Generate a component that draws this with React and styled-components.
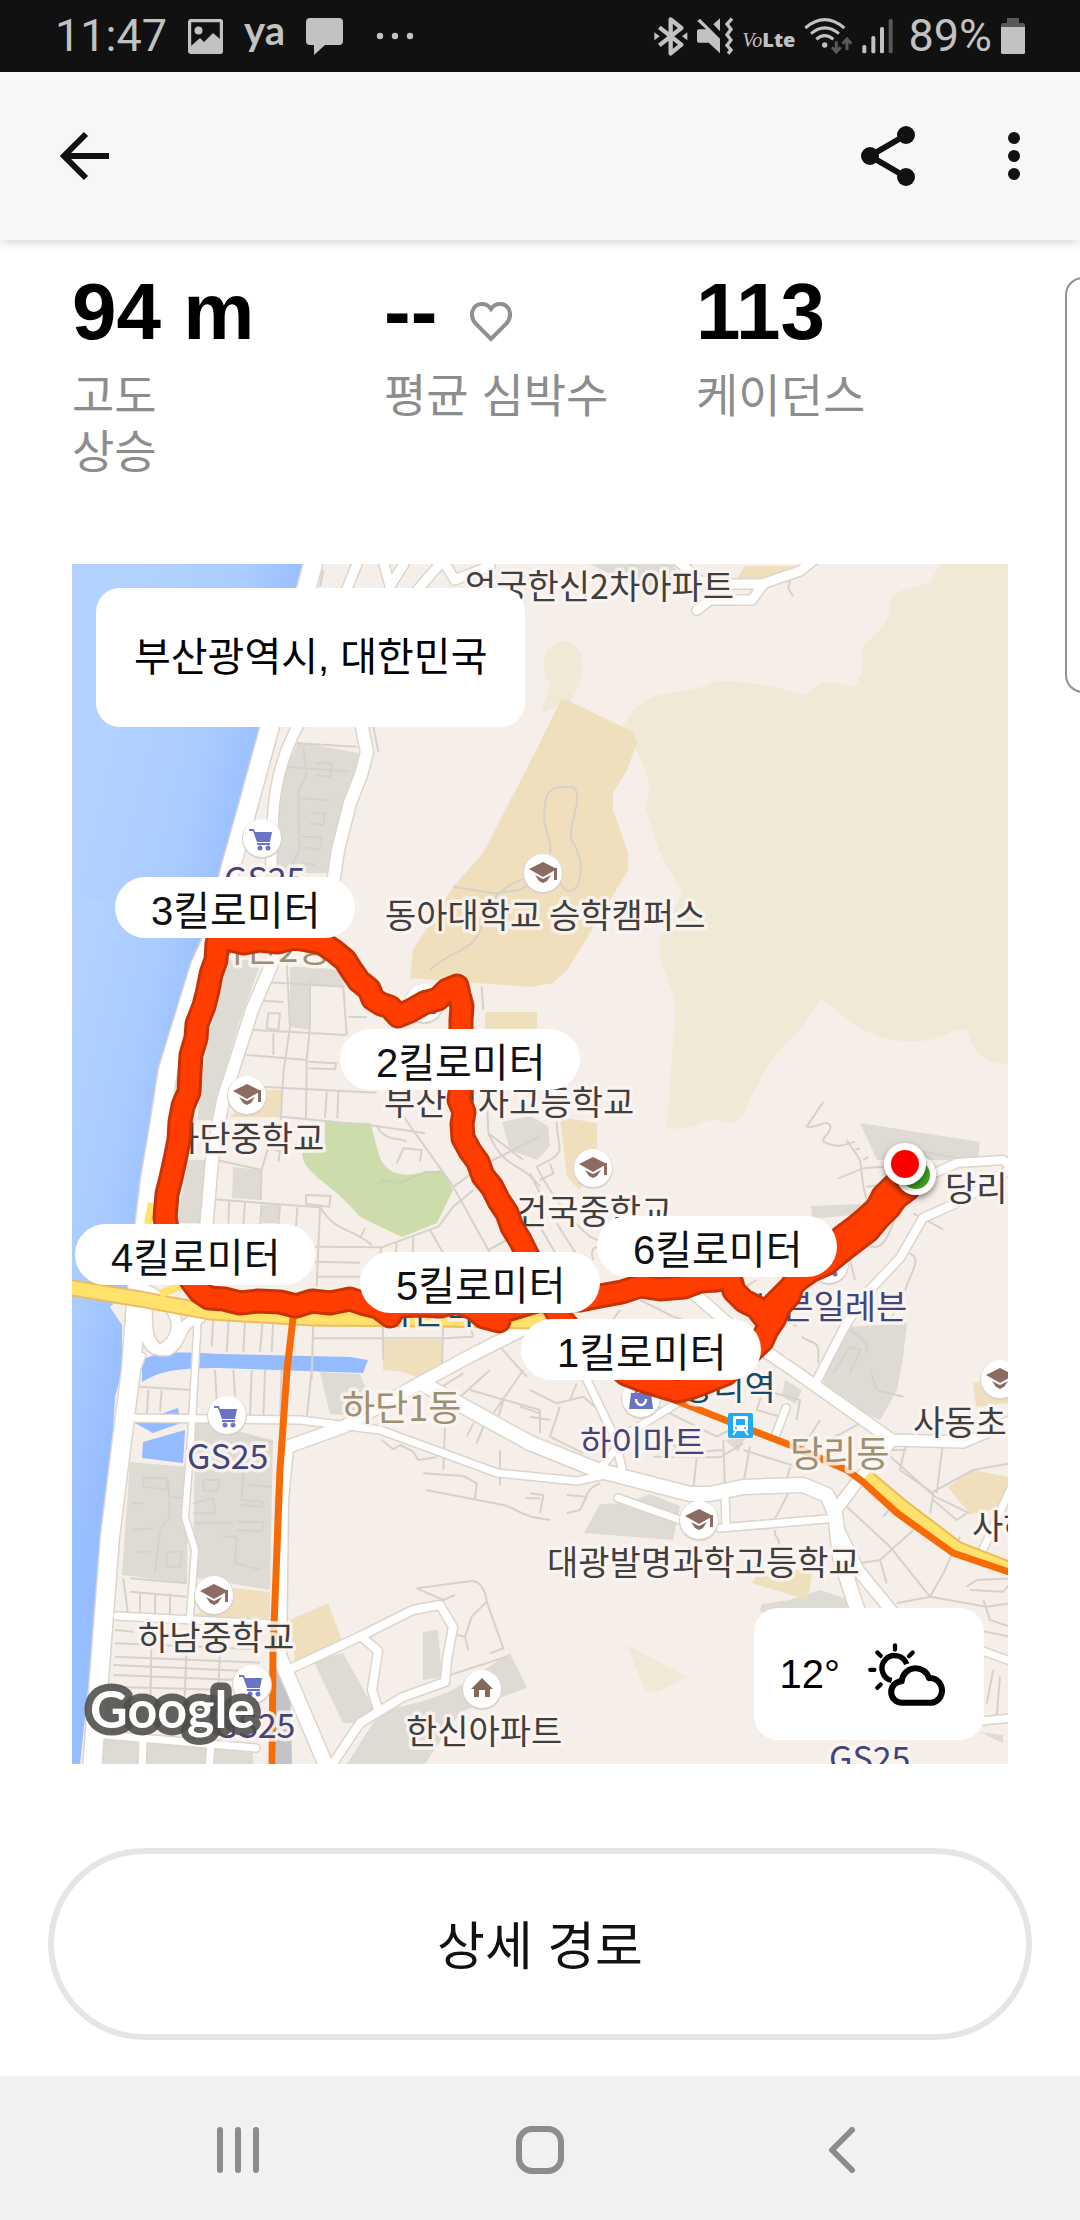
import React from "react";
import styled, { createGlobalStyle } from "styled-components";

const GlobalStyle = createGlobalStyle`
  *, *::before, *::after { box-sizing: border-box; }
  body {
    margin: 0;
    background: #ffffff;
    color: #111111;
    font-family: "Liberation Sans", "Noto Sans CJK KR", sans-serif;
  }
  button {
    border: 0;
    padding: 0;
    background: none;
    color: inherit;
    font: inherit;
    cursor: pointer;
  }
  svg { display: block; flex: none; }
`;

const Screen = styled.div`
  position: relative;
  display: flex;
  flex-direction: column;
  min-height: 100vh;
  overflow-x: hidden;
`;

const StatusBar = styled.div`
  display: flex;
  align-items: center;
  justify-content: space-between;
  height: 72px;
  padding: 0 55px;
  background: #111111;
  color: #c2c2c2;
  font-family: Roboto, sans-serif;
  font-size: 45px;
  line-height: 72px;
`;

const StatusGroup = styled.div`
  display: flex;
  align-items: center;
  gap: ${(p) => p.$gap}px;
`;

const Battery = styled.div`
  display: flex;
  align-items: center;
  gap: 9px;
  margin-left: 6px;
`;

const Carrier = styled.span`
  font-family: ${(p) => (p.$script ? '"Liberation Serif", serif' : '"Open Sans", sans-serif')};
  font-style: ${(p) => (p.$script ? "italic" : "normal")};
  font-weight: ${(p) => (p.$script ? 400 : 800)};
  font-size: 20px;
`;

const AppMark = styled.span`
  font-family: Lato, sans-serif;
  font-weight: 700;
  font-size: 40px;
  line-height: 60px;
  padding-bottom: 12px;
`;

const Toolbar = styled.header`
  display: flex;
  align-items: center;
  justify-content: space-between;
  height: 168px;
  padding: 0 36px;
  background: #f7f7f7;
  box-shadow: 0 0 12px rgba(0, 0, 0, 0.24);
  clip-path: inset(0 0 -20px 0);
`;

const ToolbarActions = styled.div`
  display: flex;
  gap: 30px;
  margin-right: -18px;
`;

const IconButton = styled.button`
  display: flex;
  align-items: center;
  justify-content: center;
  width: 96px;
  height: 96px;
`;

const Content = styled.main`
  display: flex;
  flex: 1;
  flex-direction: column;
  gap: 84px;
  padding: 24px 0 36px;
`;

const Stats = styled.dl`
  display: grid;
  grid-template-columns: repeat(3, 1fr);
  margin: 0 72px;
`;

const Stat = styled.div`
  display: flex;
  flex-direction: column;
  gap: 8px;
`;

const StatValue = styled.dd`
  display: flex;
  align-items: center;
  gap: 32px;
  margin: 0;
  color: #000000;
  font-size: 80px;
  font-weight: 700;
  line-height: 96px;
  white-space: nowrap;

  svg { margin-top: 20px; }
`;

const StatLabel = styled.dt`
  order: 1;
  color: #8d8d8d;
  font-size: 46px;
  line-height: 56px;
`;

const EdgePanel = styled.aside`
  position: absolute;
  top: 277px;
  right: -25px;
  width: 40px;
  height: 416px;
  border: 2px solid #919191;
  border-radius: 18px;
  background: #ffffff;
`;

const MapCard = styled.section`
  position: relative;
  margin: 0 72px;
  aspect-ratio: 936 / 1200;
  overflow: hidden;
`;

const MapArt = styled.svg`
  width: 100%;
  height: 100%;
`;

const MapLabel = styled.text`
  fill: ${(p) => p.$tone};
  stroke: #fcf5f2;
  stroke-width: 7px;
  stroke-linejoin: round;
  stroke-opacity: 0.85;
  paint-order: stroke;
  font-family: "Noto Sans CJK KR", sans-serif;
  font-weight: 400;
  font-size: ${(p) => p.$size}px;
`;

const GoogleMark = styled.text`
  fill: #ffffff;
  stroke: #4d4c49;
  stroke-width: 15px;
  stroke-linejoin: round;
  stroke-opacity: 0.88;
  paint-order: stroke;
  font-family: Lato, sans-serif;
  font-weight: 700;
  font-size: 52px;
`;

const Pin = styled.div`
  position: absolute;
  left: ${(p) => (p.$x / 936) * 100}%;
  top: ${(p) => (p.$y / 1200) * 100}%;
  height: 61px;
  padding: 4px 35px 0 36px;
  border-radius: 31px;
  background: #ffffff;
  color: #111111;
  font-size: 40px;
  line-height: 60px;
  white-space: nowrap;
`;

const Chip = styled.div`
  position: absolute;
  display: flex;
  align-items: center;
  border-radius: 24px;
  background: #ffffff;
  color: #000000;
  font-size: 40px;
  white-space: nowrap;
`;

const PlaceChip = styled(Chip)`
  top: 24px;
  left: 24px;
  height: 139px;
  padding: 0 38px 8px;
`;

const WeatherChip = styled(Chip)`
  right: 24px;
  bottom: 24px;
  gap: 27px;
  height: 132px;
  padding: 0 37px 0 26px;
`;

const RouteButton = styled.button`
  height: 192px;
  margin: 0 48px;
  padding-bottom: 4px;
  border: 6px solid #e5e5e5;
  border-radius: 96px;
  color: #111111;
  font-size: 52px;
  font-weight: 400;
`;

const NavBar = styled.nav`
  display: grid;
  grid-template-columns: repeat(3, 1fr);
  height: 144px;
  padding: 4px 87px 0;
  background: #f1f1f1;
`;

const NavButton = styled.button`
  display: flex;
  align-items: center;
  justify-content: center;
`;

/* ---------- map data ---------- */

const DARK = "#403f3e";
const SHOP = "#41457a";
const AREA = "#9c8f72";
const RAIL = "#144a69";

const labels = [
  ["엄궁한신2차아파트", 465, 599, DARK],
  ["GS25", 224, 892, SHOP],
  ["동아대학교 승학캠퍼스", 385, 928, DARK],
  ["하단2동", 212, 962, AREA],
  ["부산여자고등학교", 384, 1115, DARK],
  ["하단중학교", 168, 1151, DARK],
  ["건국중학교", 516, 1224, DARK],
  ["당리중학교", 945, 1201, DARK],
  ["세븐일레븐", 751, 1319, SHOP],
  ["하단역", 381, 1324, RAIL],
  ["당리역", 682, 1400, RAIL],
  ["하이마트", 580, 1455, SHOP],
  ["당리동", 790, 1467, AREA],
  ["하단1동", 342, 1421, AREA],
  ["사동초등학교", 913, 1435, DARK],
  ["사하", 972, 1539, DARK],
  ["대광발명과학고등학교", 547, 1575, DARK],
  ["GS25", 187, 1469, SHOP],
  ["하남중학교", 138, 1650, DARK],
  ["GS25", 214, 1738, SHOP],
  ["한신아파트", 406, 1744, DARK],
  ["GS25", 829, 1771, SHOP],
];

const pois = [
  ["cart", 262, 838],
  ["school", 543, 873],
  ["bag", 424, 1003],
  ["school", 247, 1095],
  ["school", 593, 1168],
  ["cart", 829, 1264],
  ["school", 1000, 1379],
  ["bag", 641, 1398],
  ["cart", 227, 1415],
  ["school", 699, 1520],
  ["school", 214, 1595],
  ["cart", 252, 1684],
  ["home", 482, 1689],
];

const pins = [
  ["3킬로미터", 43, 313],
  ["2킬로미터", 268, 465],
  ["4킬로미터", 3, 660],
  ["5킬로미터", 288, 688],
  ["6킬로미터", 525, 652],
  ["1킬로미터", 449, 755],
];

const routePath =
  "M900 1180 L891 1188 883 1196 877 1208 866 1218 854 1228 842 1237 832 1245 L818 1259 804 1270 793 1284 789 1296 780 1306 775 1318 767 1330 762 1341 L744 1358 726 1374 706 1382 690 1388 677 1391 660 1386 644 1381 626 1374 L600 1352 575 1334 560 1318 544 1288 527 1254 L520 1240 512 1227 507 1213 499 1201 492 1187 483 1176 478 1162 470 1151 463 1138 462 1124 464 1112 459 1100 461 1087 L461 1020 462 1006 459 995 457 986 447 990 438 999 424 1003 410 1011 398 1016 390 1007 381 1004 373 999 369 989 359 981 352 971 345 960 334 951 322 943 307 940 293 938 278 942 260 940 244 943 228 939 217 943 L216 960 211 974 208 990 204 1006 197 1024 196 1038 191 1055 190 1072 189 1092 183 1106 180 1122 179 1140 175 1160 171 1178 167 1194 165 1218 L172 1252 193 1283 200 1292 209 1298 224 1299 240 1303 258 1301 280 1302 296 1306 312 1301 330 1303 350 1299 362 1303 378 1307 390 1316 L396 1306 420 1305 440 1306 456 1302 473 1308 484 1317 499 1321 L500 1312 540 1300 580 1300 600 1296 622 1292 640 1286 660 1289 684 1287 700 1281 716 1280 730 1277 734 1291 744 1301 756 1307 764 1317 L773 1305 786 1292 799 1279 812 1270 826 1264 L843 1250 856 1240 868 1231 878 1219 889 1208 896 1198 908 1189";

const white = "#ffffff";
const casing = "#dcd5ca";

const roads = [
  [18, "M313 564 L267 737 247 810 232 863 212 940 200 966 168 1070 157 1140 150 1180 137 1290 131 1370 122 1440 110 1537 101 1653 92 1770"],
  [10, "M300 722 C284 750 275 780 273 817 L271 870"],
  [12, "M361 722 L367 752 361 775 350 803 338 850 332 890 318 950 M278 945 L271 966 252 1010 236 1060 223 1100 212 1160 206 1230 202 1310"],
  [9, "M357 564 L340 606 M384 564 L390 586 404 564 M440 564 L400 610 M445 564 L455 580 490 566"],
  [9, "M677 560 L700 581 730 584 762 584 800 571 814 560 M762 586 L752 600 710 600 697 610"],
  [10, "M133 1310 C150 1340 145 1352 168 1350 C184 1342 177 1322 200 1318 M146 1290 C182 1305 186 1338 160 1350 C144 1342 148 1325 146 1300"],
  [6, "M200 1314 L300 1318 M136 1372 L142 1356 M198 1315 L191 1440 185 1517 195 1550 190 1617"],
  [7, "M131 1418 L300 1420 380 1430 443 1453 497 1473 577 1481 613 1473"],
  [12, "M280 1660 L282 1500 287 1447 343 1427 413 1387 470 1356 545 1318"],
  [14, "M423 1384 L530 1443 597 1470 690 1494 710 1494 743 1487 803 1485 827 1495 835 1513 840 1557 858 1612"],
  [11, "M837 1527 L858 1570 894 1614 M833 1514 L857 1482 892 1440 M892 1440 L963 1442 1010 1422 M892 1440 L820 1389 793 1370 740 1334 690 1290"],
  [8, "M815 1384 L843 1330 863 1297 900 1258 923 1218 963 1200 1012 1168 1003 1160 957 1163 930 1175"],
  [14, "M278 1653 L328 1770"],
  [8, "M290 1669 L363 1635 413 1610 440 1605 453 1627 447 1660 445 1682 403 1697 360 1723 330 1768 M362 1637 L378 1651 372 1690 378 1709"],
  [7, "M117 1616 L193 1620 272 1624 M93 1734 L256 1748"],
  [7, "M618 1498 L683 1521 M720 1528 L826 1519 M725 1492 L726 1526"],
  [7, "M786 1408 L776 1434 M586 1378 L614 1436 622 1468 M682 1400 L630 1432 602 1466"],
  [7, "M980 1556 L1010 1490 M980 1650 L1010 1661 M970 1722 L1012 1718 M143 1740 L142 1770 M211 1744 L209 1770"],
];

/* fine streets, drawn on quarter tiles at three units per map unit */
const lanes = [
  [60, 960, "M680 0 L690 200 670 340 662 480 M600 65 L850 80 860 225 M575 210 L860 225 M560 285 L740 300 738 480 M600 380 L950 398 M640 220 L640 285 M625 160 L660 160 655 210 620 205 Z M750 60 L750 200 740 300 M605 122 L670 126 M865 170 L920 172 M745 305 L828 310 825 328 745 325 M835 395 L832 475 M800 395 L795 475 M665 470 L950 498 1095 520 M995 420 L1180 680 1285 870 1300 900 M950 498 C980 550 1020 530 1040 545 M1010 610 L1030 565 1085 570 1080 605 M470 600 L605 630 625 560 660 575 655 605 M605 630 L602 720 M460 718 L780 742 C830 820 870 800 935 855 M738 705 L812 708 808 740 738 732 Z M508 725 L505 790 M555 725 L550 795 M605 735 L600 795 M660 738 L655 800 M712 742 L708 800 M765 860 L965 862 1135 800 1180 740 1240 690 M780 745 L770 980 M765 905 L900 908 M770 950 L900 950 M965 862 L960 880 M1010 845 L1008 880 M1060 830 L1058 880 M1110 810 L1150 880 M1285 870 L1340 840 M1180 680 L1280 610 1440 530 M1285 520 C1340 640 1380 600 1440 680 M1280 390 L1285 520 1390 600 M900 835 L915 805 M460 1080 L455 1160 M506 1080 L500 1175 M555 1080 L550 1175 M608 1080 L600 1175 M760 1080 L755 1260 M640 1080 L635 1175 M760 1135 L1150 1135 1240 1130 M968 1080 L970 1200 M1150 1080 L1145 1240 M1320 1160 L1400 1250 M1230 1100 L1240 1130 M1265 80 L1270 150 M1270 240 L1440 245"],
  [60, 1370, "M240 50 L390 60 M265 60 L260 140 M305 60 L300 125 M465 0 L470 90 M520 0 L525 80 M575 0 L570 145 M615 0 L610 145 M665 0 L660 145 M755 0 L740 145 M570 200 L640 220 M1130 60 L1210 10 M1190 90 L1290 0 M1230 60 L1440 120 M1300 130 L1390 0 M1330 90 L1310 160 M1380 110 L1440 130 M1270 170 L1250 220 M1240 160 L1220 200 M1155 170 L1150 300 M1090 310 L1210 318 1250 340 1245 385 M1098 360 L1330 405 C1380 420 1390 440 1440 444 M1320 240 L1320 345 M965 210 L1000 238 1020 225 1060 245 1075 270 1130 262 M1395 385 L1440 385 M210 625 L380 640 M210 665 L380 680 M190 625 L205 740 M240 670 L240 735 M285 670 L285 735 M330 670 L330 735 M165 780 L220 785 M165 820 L600 838 M165 860 L600 878 M160 885 L600 905 M160 915 L590 932 M155 950 L500 960 M155 990 L500 1000 M275 780 L270 1080 M380 830 L370 1080 M480 840 L475 950 M1070 655 L1240 632 C1270 640 1280 680 1280 695 L1330 835 1290 850 M1280 695 L1235 740 1215 800 1190 795 M1070 655 L1150 690 1185 675 M1215 800 L1225 840 M1170 915 L1340 860"],
  [60, 1370, "M250 325 L320 325 320 360 250 350 Z M325 330 L330 440 300 480 285 610 M330 380 L370 385 M400 400 L460 385 465 430 400 430 M430 330 L480 330 470 365 430 360 Z M550 300 L545 390 610 395 605 410 540 405 M560 345 L635 350 M530 455 L610 455 605 485 530 480 M400 460 L520 460 M490 500 L530 500 525 580 605 600 M320 545 L365 545 360 590 320 590 Z M230 545 L270 545 M215 400 L250 400 M215 480 L280 475"],
  [60, 550, "M710 580 L890 590 M680 650 L870 665 M730 590 L740 670 715 720 718 900 690 960 M765 640 L815 640 812 680 770 675 M715 745 L810 750 M755 790 L795 790 790 825 750 820 M725 860 L785 862 780 900 730 890 M730 940 L765 945 M1180 1010 L1300 1030 1380 1020 1440 985 M940 530 L955 605 M660 1000 L700 970 M790 60 L780 110 M1110 1260 C1200 1180 1230 1220 1270 1120 C1290 1040 1340 1000 1400 985 M820 1170 L880 1240"],
  [530, 550, "M60 910 C70 860 30 830 45 770 C45 720 70 705 130 712 C165 740 110 830 125 870 C170 940 150 1010 130 1020 C110 1030 90 1010 90 990 M780 90 L775 115 790 140"],
  [530, 960, "M880 425 L830 500 C860 510 890 470 902 500 C890 540 880 520 880 545 C930 570 950 550 975 545 M950 540 L990 600 M990 600 L1000 680 1020 760 M925 655 L1000 625 1060 620 M1010 680 L1050 675 M975 570 L990 565 M1000 600 L1015 590 M80 480 C80 560 110 570 60 600 L20 620 C60 700 120 780 180 830 L330 900 M30 660 L70 640 60 610 M30 800 L100 920 M80 790 L150 900 M0 640 L40 720 M190 900 C170 840 230 860 260 900 M1100 760 C1060 880 1040 860 1020 860 M1140 880 C1180 900 1140 930 1120 1010 L1080 1080 M1150 760 L1240 808 M960 900 L975 960 M630 990 L680 960 M1000 850 L960 860 M730 1050 L800 1100 M815 1130 C840 1150 860 1140 865 1170 L865 1210 M270 1050 L240 1090 M330 1020 L430 1070 560 1110 M950 1100 L1010 1150 1010 1180 M910 1240 L960 1160 990 1170 960 1240 M1100 560 L1340 605"],
  [530, 1370, "M0 60 L80 100 160 80 M30 120 L30 190 M0 140 L60 150 M90 110 L60 200 160 250 M160 80 L240 150 M140 40 L120 90 M350 60 L420 90 M380 110 L560 200 600 180 M430 220 L450 250 580 240 M370 260 L570 262 640 220 M580 210 L585 370 M500 260 L490 360 M640 240 L800 290 M780 290 L765 350 M660 230 L640 340 M700 60 L680 120 750 140 M700 60 L810 90 800 150 M870 150 L800 260 M860 230 L990 160 M1130 210 L1110 300 1210 370 1200 430 M1210 365 L1330 300 1440 280 M1070 250 L1215 380 1320 430 M1240 210 L1220 370 M950 410 L1080 530 1200 680 M1050 570 L1150 480 M1080 240 L1130 240 M1110 380 L1060 440 M990 580 L1050 570 1070 640 M1100 700 L1200 680 1240 610 1290 500 M1200 680 L1370 710 1440 700 M1310 650 L1340 630 1440 625 M1320 660 L1420 665 1440 640 M1360 690 L1380 750 1440 770 M1210 390 L1280 450 1310 430 M890 740 L860 770 M600 480 L720 475 780 360 M735 480 C730 510 760 500 740 540 M0 440 L60 450 M110 375 L170 380 150 420 110 430 M0 370 L40 375 30 430 M210 340 C180 350 170 370 160 400 M870 20 L850 60 M1020 0 L1040 60 1120 80 M1340 780 L1440 800 M1390 900 L1370 1000 M1410 920 L1400 1040"],
];

function PoiGlyph({ kind }) {
  if (kind === "cart")
    return (
      <g fill="#6a74c4">
        <path d="M-13 -9 H-8 L-7 -6 H10 L8 4 H-5 L-9 -7 H-13 Z" />
        <path d="M-5 5 H8 V7 H-5 Z" />
        <circle cx="-2" cy="10" r="2.5" />
        <circle cx="6" cy="10" r="2.5" />
      </g>
    );
  if (kind === "bag")
    return (
      <g>
        <path d="M-10 -5 H10 L12 11 H-12 Z" fill="#6a74c4" />
        <path d="M-5 -5 A5 7 0 0 1 5 -5" fill="none" stroke="#6a74c4" strokeWidth="2.5" />
        <path d="M-5 1 A5 6 0 0 0 5 1" fill="none" stroke="#ffffff" strokeWidth="2.5" />
      </g>
    );
  if (kind === "home") return <path d="M0 -11 L11 0 H8 V8 H3 V1 H-3 V8 H-8 V0 H-11 Z" fill="#85675c" />;
  return (
    <g fill="#8b6b62">
      <path d="M0 -11 L14 -4 L0 4 L-14 -4 Z" />
      <path d="M-8 2 L0 6 L8 2 L4 8 L0 10 L-4 8 Z" />
      <path d="M12 -5 H14 V7 H11 V-3 Z" />
    </g>
  );
}

function RunMap() {
  return (
    <MapArt viewBox="72 564 936 1200" role="img" aria-label="달리기 경로 지도">
      <defs>
        <linearGradient id="sea" gradientUnits="userSpaceOnUse" x1="72" y1="1000" x2="205" y2="1030">
          <stop offset="0" stopColor="#b3d2ff" />
          <stop offset="0.55" stopColor="#a9cbff" />
          <stop offset="1" stopColor="#96bdff" />
        </linearGradient>
        <linearGradient id="seaNorth" gradientUnits="userSpaceOnUse" x1="120" y1="650" x2="285" y2="690">
          <stop offset="0" stopColor="#b3d2ff" />
          <stop offset="0.6" stopColor="#abccff" />
          <stop offset="1" stopColor="#96bdff" />
        </linearGradient>
        <filter id="drop" x="-50%" y="-50%" width="200%" height="200%">
          <feDropShadow dx="0" dy="3" stdDeviation="3" floodOpacity="0.5" />
        </filter>
      </defs>

      <rect x="72" y="564" width="936" height="1200" fill="#f6eee8" />
      <path d="M72 564 H302 L260 727 240 797 197 960 H72 Z" fill="url(#seaNorth)" />
      <path d="M72 900 L213 900 197 960 173 1050 160 1113 150 1180 142 1223 128 1290 110 1307 122 1325 122 1370 115 1397 113 1430 103 1530 92 1653 80 1764 H72 Z" fill="url(#sea)" />

      <g fill="#dedbd5">
        <path d="M298 742 L358 753 357 783 340 817 330 873 277 873 277 810 287 767 Z" />
        <path d="M227 960 H262 L240 1020 223 1077 213 1120 197 1120 207 1043 Z" />
        <path d="M188 1160 H207 L203 1223 H177 Z" />
        <path d="M290 967 H312 L340 970 345 988 310 985 310 1030 290 1027 Z" />
        <path d="M233 1167 L262 1170 260 1200 232 1198 Z M262 1205 H280 L278 1223 H262 Z" />
        <path d="M130 1462 L188 1467 187 1583 122 1575 Z M195 1420 L273 1440 270 1590 193 1577 Z" />
        <path d="M320 1372 L360 1374 370 1400 355 1416 330 1414 Z" />
        <path d="M313 1660 L343 1653 373 1707 363 1723 343 1723 Z M423 1632 L438 1630 442 1677 423 1680 Z" />
        <path d="M347 1764 L380 1712 427 1700 453 1690 510 1653 527 1688 460 1712 425 1764 Z" />
        <path d="M103 1737 L253 1753 V1764 H102 Z" />
        <path d="M590 564 H672 L690 588 650 594 Z" />
        <path d="M502 1122 L530 1116 548 1126 550 1146 537 1160 510 1150 Z" />
        <path d="M860 1123 L980 1142 978 1160 877 1160 Z M811 1206 L860 1204 861 1214 812 1219 Z" />
        <path d="M847 1327 L907 1323 903 1357 897 1390 880 1420 820 1393 827 1370 Z" />
        <path d="M600 1504 L627 1503 650 1494 680 1506 673 1540 584 1533 Z" />
        <path d="M762 1604 L790 1600 820 1590 850 1600 845 1612 H760 Z M980 1732 L1003 1735 V1743 Z" />
        <path d="M725 1440 L745 1438 738 1452 Z M785 1380 L802 1390 795 1404 782 1396 Z" />
      </g>
      <path d="M275 1668 L290 1670 292 1764 H276 Z" fill="#c3c3c9" />

      <g fill="#efe9d6">
        <path d="M940 564 L930 583 C905 590 890 590 890 605 C888 640 860 635 862 655 C865 670 858 680 855 687 C840 685 830 678 815 686 L805 696 C780 686 740 680 715 682 C685 695 660 690 645 702 C630 710 630 718 623 725 L636 750 C650 775 652 790 645 808 L660 853 682 893 660 940 C656 970 678 985 675 1020 L667 1127 C690 1135 705 1112 730 1123 C750 1118 745 1100 757 1087 C770 1050 800 1040 820 998 C850 1020 870 1045 923 1041 C945 1038 958 1026 967 1030 C975 1060 990 1062 1008 1065 V564 Z" />
        <path d="M541 713 L550 685 C540 670 540 641 567 641 C588 645 583 680 577 690 L570 702 Z" />
        <path d="M627 1645 L687 1677 657 1692 645 1690 Z" />
      </g>
      <g fill="#efdfbc">
        <path d="M565 699 L633 732 637 743 627 770 613 793 V810 L628 852 V870 L610 900 590 933 567 970 553 983 530 987 410 978 413 950 453 887 483 853 540 743 560 702 Z" />
        <path d="M485 1012 H537 V1030 H485 Z M263 1090 H282 L280 1117 H230 Z" />
        <path d="M560 1117 L597 1123 V1150 L580 1190 567 1177 Z M383 1340 H442 V1375 L383 1370 Z" />
        <path d="M233 1588 L270 1592 V1618 L193 1617 Z M290 1620 L328 1603 342 1640 295 1663 Z" />
        <path d="M948 1487 L973 1470 1008 1477 V1500 L990 1510 970 1514 Z" />
        <path d="M760 1570 H813 L807 1600 752 1583 Z M973 1383 L1008 1376 V1403 L976 1407 Z" />
        <path d="M728 592 L745 566 H795 L770 580 Z M400 1371 L440 1370 425 1380 Z" />
      </g>
      <path d="M325 1122 L370 1123 C380 1150 375 1172 407 1175 L443 1170 453 1190 437 1223 402 1237 360 1217 C330 1180 303 1175 302 1153 L325 1150 Z" fill="#cddcab" />
      <path d="M142 1360 C155 1352 180 1351 220 1354 L350 1357 368 1360 363 1373 220 1368 C170 1368 160 1372 142 1382 Z M135 1423 L178 1408 181 1423 153 1433 Z M143 1442 L185 1430 183 1463 142 1458 Z" fill="#94bbff" />

      <g fill="none" stroke="#d6d2ca" strokeWidth="6" strokeLinejoin="round">
        {lanes.map(([x, y, d], i) => (
          <path key={i} d={d} transform={`translate(${x} ${y}) scale(.33333)`} />
        ))}
      </g>
      <path d="M382 780 L388 820 394 812 408 775 M365 806 L358 850 363 940" stroke="#f3efe9" strokeWidth="3" fill="none" />
      <path d="M380 1184 L382 1180 400 1183 425 1172 440 1172" stroke="#c9d0b4" strokeWidth="2" fill="none" />

      <g fill="none" strokeLinejoin="round" strokeLinecap="round">
        {roads.map(([w, d], i) => (
          <path key={i} d={d} stroke={casing} strokeWidth={w + 3} />
        ))}
        {roads.map(([w, d], i) => (
          <path key={i} d={d} stroke={white} strokeWidth={w} />
        ))}
      </g>

      <g fill="none" strokeLinejoin="round">
        <path d="M60 1286 L140 1299 210 1312 313 1318 443 1319 575 1322" stroke="#e9bd60" strokeWidth="17" />
        <path d="M60 1286 L140 1299 210 1312 313 1318 443 1319 575 1322" stroke="#ffe16b" strokeWidth="13" />
        <path d="M152 1203 L148 1224 M160 1294 L190 1282" stroke="#ffe16b" strokeWidth="8" />
        <path d="M867 1476 L904 1507 958 1548 1012 1569" stroke="#e9bd50" strokeWidth="14" />
        <path d="M867 1476 L904 1507 958 1548 1012 1569" stroke="#ffe16b" strokeWidth="10" />
        <path d="M294 1310 L287 1370 280 1470 273 1653 272 1770" stroke="#f76b06" strokeWidth="7" />
        <path d="M672 1399 L730 1422 790 1445 847 1470 863 1482 897 1513 953 1553 1012 1573" stroke="#f76b06" strokeWidth="7" />
      </g>

      {pois.map(([kind, x, y], i) => (
        <g key={i} transform={`translate(${x} ${y})`}>
          <circle cy="1" r="20" fill="#d9d3cc" />
          <circle r="19" fill="#ffffff" />
          <PoiGlyph kind={kind} />
        </g>
      ))}
      <g transform="translate(728 1413)">
        <rect width="25" height="25" rx="2" fill="#1eabf4" />
        <path d="M6 3 H19 Q20 3 20 5 V17 Q20 18 18 18 H7 Q5 18 5 17 V5 Q5 3 6 3 Z M8 6 V12 H17 V6 Z" fill="#ffffff" fillRule="evenodd" />
        <path d="M8 18 L5 22 M17 18 L20 22" stroke="#ffffff" strokeWidth="2" />
        <circle cx="8" cy="15" r="1" fill="#1eabf4" />
        <circle cx="17" cy="15" r="1" fill="#1eabf4" />
      </g>

      {labels.map(([name, x, y, tone], i) => (
        <MapLabel key={i} x={x} y={y} $tone={tone} $size={tone === AREA ? 36 : 34}>
          {name}
        </MapLabel>
      ))}
      <GoogleMark x="90" y="1728">Google</GoogleMark>

      <g fill="none" strokeLinejoin="round" strokeLinecap="round">
        <path d={routePath} stroke="#c93304" strokeWidth="25" />
        <path d={routePath} stroke="#ff3d00" strokeWidth="19" />
      </g>
      <g filter="url(#drop)">
        <circle cx="916" cy="1175" r="20" fill="#ffffff" />
        <circle cx="916" cy="1175" r="14" fill="#3fa31a" />
      </g>
      <g filter="url(#drop)">
        <circle cx="905" cy="1164" r="21" fill="#ffffff" />
        <circle cx="905" cy="1164" r="14" fill="#fa0000" />
      </g>
    </MapArt>
  );
}

/* ---------- icons ---------- */

const PictureIcon = () => (
  <svg width="35" height="35" viewBox="0 0 35 35">
    <rect x="1.5" y="1.5" width="32" height="32" rx="2" fill="none" stroke="#c2c2c2" strokeWidth="3.4" />
    <circle cx="10.5" cy="11.5" r="4" fill="#c2c2c2" />
    <path d="M3 27 L12 19 L16 23 L25 14 L32 20 V33 H3 Z" fill="#c2c2c2" />
  </svg>
);

const MessageIcon = () => (
  <svg width="37" height="37" viewBox="0 0 37 37">
    <path d="M4 0 H33 Q37 0 37 4 V23 Q37 27 33 27 H19 L8 37 V27 H4 Q0 27 0 23 V4 Q0 0 4 0 Z" fill="#c2c2c2" />
  </svg>
);

const MoreDotsIcon = () => (
  <svg width="50" height="8" viewBox="-12 0 50 8" fill="#c2c2c2">
    <circle cx="4" cy="4" r="3.2" />
    <circle cx="19" cy="4" r="3.2" />
    <circle cx="34" cy="4" r="3.2" />
  </svg>
);

const BluetoothIcon = () => (
  <svg width="34" height="39" viewBox="26 33 102 117">
    <path d="M42 64 L108 116 L76 142 V40 L108 66 L42 118" fill="none" stroke="#c2c2c2" strokeWidth="13" strokeLinejoin="round" />
    <path d="M27 79 L43 91 L27 103 Z M126 79 L110 91 L126 103 Z" fill="#c2c2c2" />
  </svg>
);

const MuteVibrateIcon = () => (
  <svg width="36" height="39" viewBox="159 33 108 117">
    <path d="M159 76 Q159 70 165 70 H186 L160 45 L168 38 L228 98 V142 L194 110 H165 Q159 110 159 104 Z M208 55 L228 37 V76 Z" fill="#c2c2c2" />
    <path d="M264 38 L249 54 L261 70 L249 86 L261 102 L249 118 L261 132 L252 143" fill="none" stroke="#c2c2c2" strokeWidth="10" />
  </svg>
);

const WifiIcon = () => (
  <svg width="49" height="39" viewBox="464 33 147 117">
    <g fill="none" stroke="#c2c2c2" strokeWidth="9">
      <path d="M468 66 Q526 16 585 66" />
      <path d="M485 83 Q526 48 569 83" />
      <path d="M501 100 Q526 78 552 100" />
    </g>
    <circle cx="526" cy="117" r="8" fill="#c2c2c2" />
    <g fill="none" stroke="#595959" strokeWidth="9">
      <path d="M561 106 V138 M548 124 L561 138 L574 124" />
      <path d="M593 132 V100 M580 113 L593 99 L606 113" />
    </g>
  </svg>
);

const SignalIcon = () => (
  <svg width="31" height="36" viewBox="637 40 93 106" fill="#c2c2c2">
    <rect x="638" y="120" width="12" height="25" rx="5" />
    <rect x="665" y="93" width="12" height="52" rx="5" />
    <rect x="691" y="66" width="12" height="79" rx="5" />
    <rect x="717" y="42" width="12" height="103" rx="5" fill="#595959" />
  </svg>
);

const BatteryIcon = () => (
  <svg width="24" height="37" viewBox="0 0 24 37">
    <path d="M6 0 H18 V5 H22 Q24 5 24 7 V12 H0 V7 Q0 5 2 5 H6 Z" fill="#595959" />
    <path d="M0 9 H24 V35 Q24 36 22 36 H2 Q0 36 0 35 Z" fill="#c2c2c2" />
  </svg>
);

const BackIcon = () => (
  <svg width="50" height="50" viewBox="0 0 50 50" fill="none" stroke="#111111" strokeWidth="6">
    <path d="M27 3 L5 25 L27 47 M5 25 H50" />
  </svg>
);

const ShareIcon = () => (
  <svg width="56" height="62" viewBox="0 0 56 62" fill="#111111">
    <path d="M46 10 L10 31 L46 52" fill="none" stroke="#111111" strokeWidth="6" />
    <circle cx="46" cy="10" r="9" />
    <circle cx="10" cy="31" r="9" />
    <circle cx="46" cy="52" r="9" />
  </svg>
);

const OverflowIcon = () => (
  <svg width="12" height="48" viewBox="0 0 12 48" fill="#111111">
    <circle cx="6" cy="6" r="6" />
    <circle cx="6" cy="24" r="6" />
    <circle cx="6" cy="42" r="6" />
  </svg>
);

const HeartIcon = () => (
  <svg width="44" height="42" viewBox="0 0 44 42">
    <path d="M22 38 L7 23 C-1 14 4 3 13 3 C17 3 20 5 22 8 C24 5 27 3 31 3 C40 3 45 14 37 23 Z" fill="none" stroke="#8f8f8f" strokeWidth="4" />
  </svg>
);

const WeatherIcon = () => (
  <svg width="80" height="65" viewBox="1008 810 240 194" fill="none" stroke="#000000">
    <path d="M1114 992 A32 32 0 0 1 1112 927 A42 42 0 0 1 1194 918 A36 37 0 0 1 1200 992 Z" strokeWidth="18" strokeLinejoin="round" />
    <path d="M1082 925 A38 38 0 1 1 1127 876" strokeWidth="16" />
    <path d="M1092 820 V832 M1039 841 L1049 851 M1145 841 L1134 852 M1018 893 H1030 M1039 947 L1049 937" strokeWidth="13" strokeLinecap="round" />
  </svg>
);

const RecentsIcon = () => (
  <svg width="44" height="46" viewBox="0 0 44 46" stroke="#8c8c8c" strokeWidth="6" strokeLinecap="round">
    <path d="M4 3 V43 M22 3 V43 M40 3 V43" />
  </svg>
);

const HomeIcon = () => (
  <svg width="48" height="48" viewBox="0 0 48 48">
    <rect x="3" y="3" width="42" height="42" rx="13" fill="none" stroke="#8c8c8c" strokeWidth="6" />
  </svg>
);

const NavBackIcon = () => (
  <svg width="28" height="46" viewBox="0 0 28 46" fill="none" stroke="#8c8c8c" strokeWidth="6" strokeLinecap="round" strokeLinejoin="round">
    <path d="M24 3 L4 23 L24 43" />
  </svg>
);

export default function App() {
  return (
    <>
      <GlobalStyle />
      <Screen>
        <StatusBar>
          <StatusGroup $gap={21}>
            <span>11:47</span>
            <PictureIcon />
            <AppMark>ya</AppMark>
            <MessageIcon />
            <MoreDotsIcon />
          </StatusGroup>
          <StatusGroup $gap={9}>
            <BluetoothIcon />
            <MuteVibrateIcon />
            <span>
              <Carrier $script>Vo</Carrier>
              <Carrier>Lte</Carrier>
            </span>
            <WifiIcon />
            <SignalIcon />
            <Battery>
              <span>89%</span>
              <BatteryIcon />
            </Battery>
          </StatusGroup>
        </StatusBar>

        <Toolbar>
          <IconButton aria-label="뒤로">
            <BackIcon />
          </IconButton>
          <ToolbarActions>
            <IconButton aria-label="공유">
              <ShareIcon />
            </IconButton>
            <IconButton aria-label="더보기">
              <OverflowIcon />
            </IconButton>
          </ToolbarActions>
        </Toolbar>

        <Content>
          <Stats>
            <Stat>
              <StatLabel>
                고도
                <br />
                상승
              </StatLabel>
              <StatValue>94 m</StatValue>
            </Stat>
            <Stat>
              <StatLabel>평균 심박수</StatLabel>
              <StatValue>
                --
                <HeartIcon />
              </StatValue>
            </Stat>
            <Stat>
              <StatLabel>케이던스</StatLabel>
              <StatValue>113</StatValue>
            </Stat>
          </Stats>

          <MapCard>
            <RunMap />
            {pins.map(([name, x, y]) => (
              <Pin key={name} $x={x} $y={y}>
                {name}
              </Pin>
            ))}
            <PlaceChip>부산광역시, 대한민국</PlaceChip>
            <WeatherChip>
              12°
              <WeatherIcon />
            </WeatherChip>
          </MapCard>

          <RouteButton>상세 경로</RouteButton>
        </Content>

        <EdgePanel />

        <NavBar>
          <NavButton aria-label="최근 앱">
            <RecentsIcon />
          </NavButton>
          <NavButton aria-label="홈">
            <HomeIcon />
          </NavButton>
          <NavButton aria-label="뒤로 가기">
            <NavBackIcon />
          </NavButton>
        </NavBar>
      </Screen>
    </>
  );
}
